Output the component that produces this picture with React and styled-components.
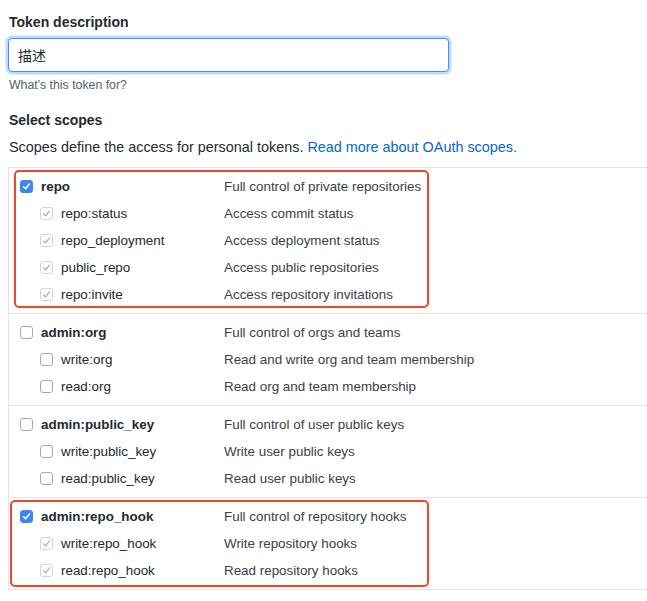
import React from "react";
import styled, { createGlobalStyle } from "styled-components";

const Global = createGlobalStyle`
  html, body {
    margin: 0;
    padding: 0;
    background: #fff;
  }
  body {
    font-family: "Liberation Sans", Arial, "Noto Sans CJK SC", sans-serif;
    color: #24292e;
    overflow: hidden;
  }
`;

const groups = [
  {
    mark: { left: 5, top: 2, width: 415, height: 138 },
    rows: [
      { name: "repo", desc: "Full control of private repositories", top: true, state: "on" },
      { name: "repo:status", desc: "Access commit status", state: "implied" },
      { name: "repo_deployment", desc: "Access deployment status", state: "implied" },
      { name: "public_repo", desc: "Access public repositories", state: "implied" },
      { name: "repo:invite", desc: "Access repository invitations", state: "implied" },
    ],
  },
  {
    rows: [
      { name: "admin:org", desc: "Full control of orgs and teams", top: true },
      { name: "write:org", desc: "Read and write org and team membership" },
      { name: "read:org", desc: "Read org and team membership" },
    ],
  },
  {
    rows: [
      { name: "admin:public_key", desc: "Full control of user public keys", top: true },
      { name: "write:public_key", desc: "Write user public keys" },
      { name: "read:public_key", desc: "Read user public keys" },
    ],
  },
  {
    mark: { left: 1, top: 2, width: 419, height: 87 },
    rows: [
      { name: "admin:repo_hook", desc: "Full control of repository hooks", top: true, state: "on" },
      { name: "write:repo_hook", desc: "Write repository hooks", state: "implied" },
      { name: "read:repo_hook", desc: "Read repository hooks", state: "implied" },
    ],
  },
];

function Check({ state }) {
  return (
    <Box $state={state}>
      {state && (
        <svg width="9" height="9" viewBox="0 0 9 9">
          <path
            d="M1.6 4.8 L3.6 6.8 L7.4 2"
            fill="none"
            stroke={state === "on" ? "#fff" : "#a8a8a8"}
            strokeWidth={state === "on" ? 1.6 : 1.2}
            strokeLinecap="round"
            strokeLinejoin="round"
          />
        </svg>
      )}
    </Box>
  );
}

export default function App() {
  return (
    <Page>
      <Global />
      <Label>Token description</Label>
      <Input defaultValue="描述" />
      <Hint>What's this token for?</Hint>
      <SubTitle>Select scopes</SubTitle>
      <Intro>
        Scopes define the access for personal tokens.{" "}
        <a href="#">Read more about OAuth scopes.</a>
      </Intro>
      <List>
        {groups.map((g, i) => (
          <Group key={i}>
            {g.rows.map((r) => (
              <Row key={r.name}>
                <Name $top={r.top}>
                  <Check state={r.state} />
                  <span>{r.name}</span>
                </Name>
                <Desc>{r.desc}</Desc>
              </Row>
            ))}
            {g.mark && (
              <Highlight
                style={{
                  left: g.mark.left,
                  top: g.mark.top,
                  width: g.mark.width,
                  height: g.mark.height,
                }}
              />
            )}
          </Group>
        ))}
      </List>
    </Page>
  );
}

const Page = styled.div`
  padding: 12px 0 0 8px;
`;

const Label = styled.div`
  font-size: 14px;
  font-weight: bold;
  line-height: 20px;
  padding-left: 1px;
`;

const Input = styled.input`
  display: block;
  box-sizing: border-box;
  margin-top: 6px;
  width: 441px;
  height: 34px;
  padding: 0 9px;
  font-family: "Liberation Sans", "Noto Sans CJK SC", sans-serif;
  font-size: 14px;
  color: #24292e;
  border: 1.5px solid #3d8ef7;
  border-radius: 4px;
  box-shadow: 0 0 0 2.5px rgba(80, 150, 240, 0.35);
  outline: none;
`;

const Hint = styled.div`
  margin-top: 4px;
  font-size: 12.3px;
  line-height: 18px;
  color: #586069;
  padding-left: 1px;
`;

const SubTitle = styled(Label)`
  margin-top: 16px;
`;

const Intro = styled.p`
  margin: 7px 0 0;
  font-size: 14.4px;
  line-height: 20px;
  padding-left: 1px;
  a {
    color: #0366d6;
    text-decoration: none;
  }
`;

const List = styled.div`
  margin-top: 10px;
  border-left: 1px solid #e1e4e8;
`;

const Group = styled.div`
  position: relative;
  border-top: 1px solid #e1e4e8;
  padding: 5px 0 5px;
  &:last-child {
    border-bottom: 1px solid #e1e4e8;
  }
`;

const Row = styled.div`
  display: grid;
  grid-template-columns: 215px 1fr;
  align-items: center;
  height: 27px;
  font-size: 13.4px;
`;

const Name = styled.div`
  display: flex;
  align-items: center;
  gap: 8px;
  padding-left: ${(p) => (p.$top ? "11px" : "31px")};
  font-weight: ${(p) => (p.$top ? "bold" : "normal")};
  color: #24292e;
`;

const Desc = styled.div`
  color: #3a4047;
`;

const Box = styled.span`
  box-sizing: border-box;
  display: inline-flex;
  align-items: center;
  justify-content: center;
  width: 13px;
  height: 13px;
  border-radius: 3px;
  border: 1px solid ${(p) => (p.$state === "on" ? "#3b86f0" : p.$state === "implied" ? "#d4d4d4" : "#a9a9a9")};
  background: ${(p) => (p.$state === "on" ? "#3b86f0" : "#fff")};
  flex: none;
`;

const Highlight = styled.div`
  position: absolute;
  box-sizing: border-box;
  border: 2.5px solid #f2462b;
  border-radius: 5px;
  pointer-events: none;
`;
